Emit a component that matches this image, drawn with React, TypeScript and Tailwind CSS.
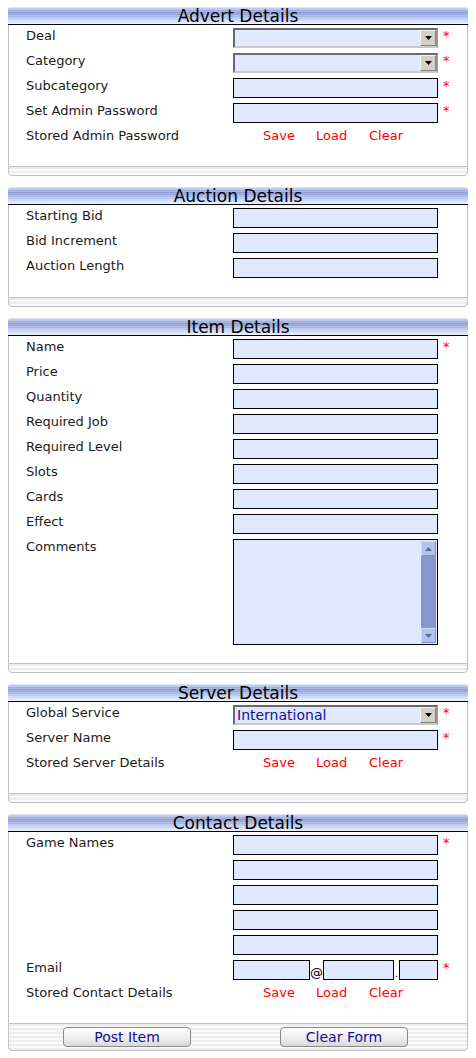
import React from 'react';

const font = "font-['DejaVu_Sans',Verdana,sans-serif]";

function Star() {
  return <span className="ml-[5px] mt-[1px] text-[13px] leading-[14px] text-[#ff0000]">*</span>;
}

function TextBox({ w = 'w-[205px]', h = 'h-[20px]' }: { w?: string; h?: string }) {
  return <div className={`${w} ${h} shrink-0 border border-black bg-[#e0e8ff]`} />;
}

function SelectBox({ value }: { value?: string }) {
  return (
    <div className="flex h-[20px] w-[205px] shrink-0 border-2 border-t-[#6a6a6a] border-l-[#6a6a6a] border-r-[#9a9a9a] border-b-[#c8c8c8] bg-[#e0e8ff]">
      <div className="flex-1 pl-[2px] text-[14px] leading-[16px] text-[#1010a0]">{value}</div>
      <div className="flex w-[16px] items-center justify-center border border-t-[#f4f2ee] border-l-[#f4f2ee] border-r-[#808080] border-b-[#808080] bg-[#d4d0c8]">
        <svg width="7" height="4" viewBox="0 0 7 4">
          <path d="M0 0h7L3.5 4z" fill="#000" />
        </svg>
      </div>
    </div>
  );
}

function Label({ text }: { text: string }) {
  return <div className="w-[224px] shrink-0 pl-[17px] text-[13px] leading-[15px] text-[#1a1a1a]">{text}</div>;
}

function Row({ label, children, star }: { label: string; children?: React.ReactNode; star?: boolean }) {
  return (
    <div className="flex h-[25px] items-start">
      <Label text={label} />
      {children}
      {star && <Star />}
    </div>
  );
}

function Links() {
  return (
    <div className="flex pl-[30px] text-[13px] leading-[15px] text-[#ff0000]">
      <span className="w-[53px]">Save</span>
      <span className="w-[53px]">Load</span>
      <span>Clear</span>
    </div>
  );
}

const stripes =
  'bg-[image:repeating-linear-gradient(to_bottom,#ececec_0px,#ececec_2px,#fafafa_2px,#fafafa_4px)]';

function Panel({
  title,
  children,
  footer,
  pb = 'pb-[13px]',
}: {
  title: string;
  children: React.ReactNode;
  footer?: React.ReactNode;
  pb?: string;
}) {
  return (
    <div className="mx-[8px] mb-[11px] w-[460px]">
      <div className="h-[18px] rounded-t-[3px] border-b border-black bg-[image:repeating-linear-gradient(to_bottom,rgba(255,255,255,0.18)_0px,rgba(255,255,255,0.18)_1px,transparent_1px,transparent_2px),linear-gradient(to_bottom,#dde4f4_0%,#a4b2e2_18%,#8a9ad4_35%,#a8b8e8_55%,#cad8f6_78%,#eaf1fc_100%)] text-center text-[17px] leading-[18px] text-black">
        {title}
      </div>
      <div className={`border-x border-[#c0c0c0] bg-white pt-[3px] ${pb}`}>{children}</div>
      {footer ?? <div className={`h-[10px] rounded-b-[4px] border border-[#c0c0c0] ${stripes}`} />}
    </div>
  );
}

function Btn({ label }: { label: string }) {
  return (
    <div className="flex h-[20px] w-[128px] items-center justify-center rounded-[4px] border border-[#8a8a8a] bg-[linear-gradient(to_bottom,#ffffff,#ececec_60%,#d8d8d8)] text-[14px] leading-[16px] text-[#10109a]">
      {label}
    </div>
  );
}

function ScrollBtn({ up }: { up?: boolean }) {
  return (
    <div className="flex h-[15px] items-center justify-center border border-t-[#d0daf6] border-l-[#d0daf6] border-r-[#8090c8] border-b-[#8090c8] bg-[#b4c2ec]">
      <svg width="7" height="4" viewBox="0 0 7 4">
        <path d={up ? 'M3.5 0L7 4H0z' : 'M0 0h7L3.5 4z'} fill="#5c6aa0" />
      </svg>
    </div>
  );
}

function TextArea() {
  return (
    <div className="flex h-[106px] w-[205px] shrink-0 border border-black bg-[#e0e8ff]">
      <div className="flex-1" />
      <div className="my-[1px] mr-[1px] flex w-[15px] flex-col bg-[#8896d0]">
        <ScrollBtn up />
        <div className="flex-1" />
        <ScrollBtn />
      </div>
    </div>
  );
}

export default function App() {
  return (
    <div className={`${font} w-[476px] bg-white pt-[7px]`}>
      <Panel title="Advert Details">
        <Row label="Deal" star><SelectBox /></Row>
        <Row label="Category" star><SelectBox /></Row>
        <Row label="Subcategory" star><TextBox /></Row>
        <Row label="Set Admin Password" star><TextBox /></Row>
        <Row label="Stored Admin Password"><Links /></Row>
      </Panel>

      <Panel title="Auction Details" pb="pb-[14px]">
        <Row label="Starting Bid"><TextBox /></Row>
        <Row label="Bid Increment"><TextBox /></Row>
        <Row label="Auction Length"><TextBox /></Row>
      </Panel>

      <Panel title="Item Details" pb="pb-[14px]">
        <Row label="Name" star><TextBox /></Row>
        <Row label="Price"><TextBox /></Row>
        <Row label="Quantity"><TextBox /></Row>
        <Row label="Required Job"><TextBox /></Row>
        <Row label="Required Level"><TextBox /></Row>
        <Row label="Slots"><TextBox /></Row>
        <Row label="Cards"><TextBox /></Row>
        <Row label="Effect"><TextBox /></Row>
        <div className="flex h-[110px] items-start">
          <Label text="Comments" />
          <TextArea />
        </div>
      </Panel>

      <Panel title="Server Details">
        <Row label="Global Service" star><SelectBox value="International" /></Row>
        <Row label="Server Name" star><TextBox /></Row>
        <Row label="Stored Server Details"><Links /></Row>
      </Panel>

      <Panel
        title="Contact Details"
        footer={
          <div className={`flex h-[28px] items-center rounded-b-[4px] border border-[#c0c0c0] pl-[54px] ${stripes}`}>
            <Btn label="Post Item" />
            <div className="w-[89px]" />
            <Btn label="Clear Form" />
          </div>
        }
      >
        <Row label="Game Names" star><TextBox /></Row>
        <Row label=""><TextBox /></Row>
        <Row label=""><TextBox /></Row>
        <Row label=""><TextBox /></Row>
        <Row label=""><TextBox /></Row>
        <Row label="Email" star>
          <div className="flex items-end">
            <TextBox w="w-[77px]" />
            <span className="w-[13px] text-center text-[13px] leading-[15px]">@</span>
            <TextBox w="w-[71px]" />
            <span className="w-[5px] text-center text-[10px] leading-[12px]">.</span>
            <TextBox w="w-[39px]" />
          </div>
        </Row>
        <Row label="Stored Contact Details"><Links /></Row>
      </Panel>
    </div>
  );
}
